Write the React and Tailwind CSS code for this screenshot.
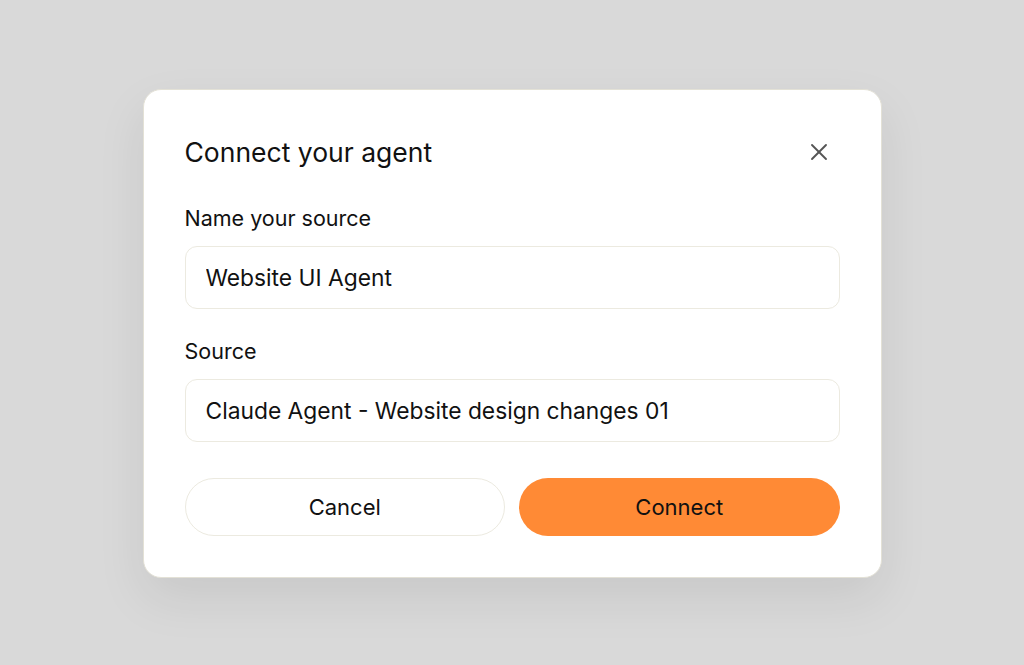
import { useState } from "react";
import { X } from "lucide-react";

export default function App() {
  const [name, setName] = useState("Website UI Agent");
  const [source, setSource] = useState("Claude Agent - Website design changes 01");

  return (
    <div
      className="min-h-screen w-full flex items-center justify-center bg-[#d9d9d9] pt-[2px]"
      style={{ fontFamily: "Inter, 'Liberation Sans', sans-serif" }}
    >
      <div className="w-[739px] rounded-[18px] border border-[#e3e1d6] bg-white px-[41px] pt-[42px] pb-[41px] shadow-[0_20px_50px_rgba(0,0,0,0.08)]">
        <div className="flex items-center justify-between">
          <h2 className="text-[26.5px] leading-[40px] font-normal text-[#111]">
            Connect your agent
          </h2>
          <button className="mr-[7px] flex h-7 w-7 items-center justify-center text-[#555]">
            <X size={28} strokeWidth={1.6} />
          </button>
        </div>

        <label className="mt-[32px] block text-[21.5px] leading-[28px] text-[#111]">
          Name your source
        </label>
        <input
          value={name}
          onChange={(event) => setName(event.target.value)}
          className="mt-[14px] block h-[63px] w-full rounded-[12px] border-[1.5px] border-[#ecEAE0] bg-white px-[20px] text-[22.8px] text-[#111] outline-none"
        />

        <label className="mt-[28px] block text-[21.5px] leading-[28px] text-[#111]">
          Source
        </label>
        <input
          value={source}
          onChange={(event) => setSource(event.target.value)}
          className="mt-[14px] block h-[63px] w-full rounded-[12px] border-[1.5px] border-[#ecEAE0] bg-white px-[20px] text-[22.8px] text-[#111] outline-none"
        />

        <div className="mt-[36px] grid grid-cols-2 gap-[14px]">
          <button className="h-[58px] rounded-full border-[1.5px] border-[#ecEAE0] bg-white text-[22px] text-[#111]">
            Cancel
          </button>
          <button className="h-[58px] rounded-full bg-[#ff8a35] text-[22px] text-[#111]">
            Connect
          </button>
        </div>
      </div>
    </div>
  );
}
